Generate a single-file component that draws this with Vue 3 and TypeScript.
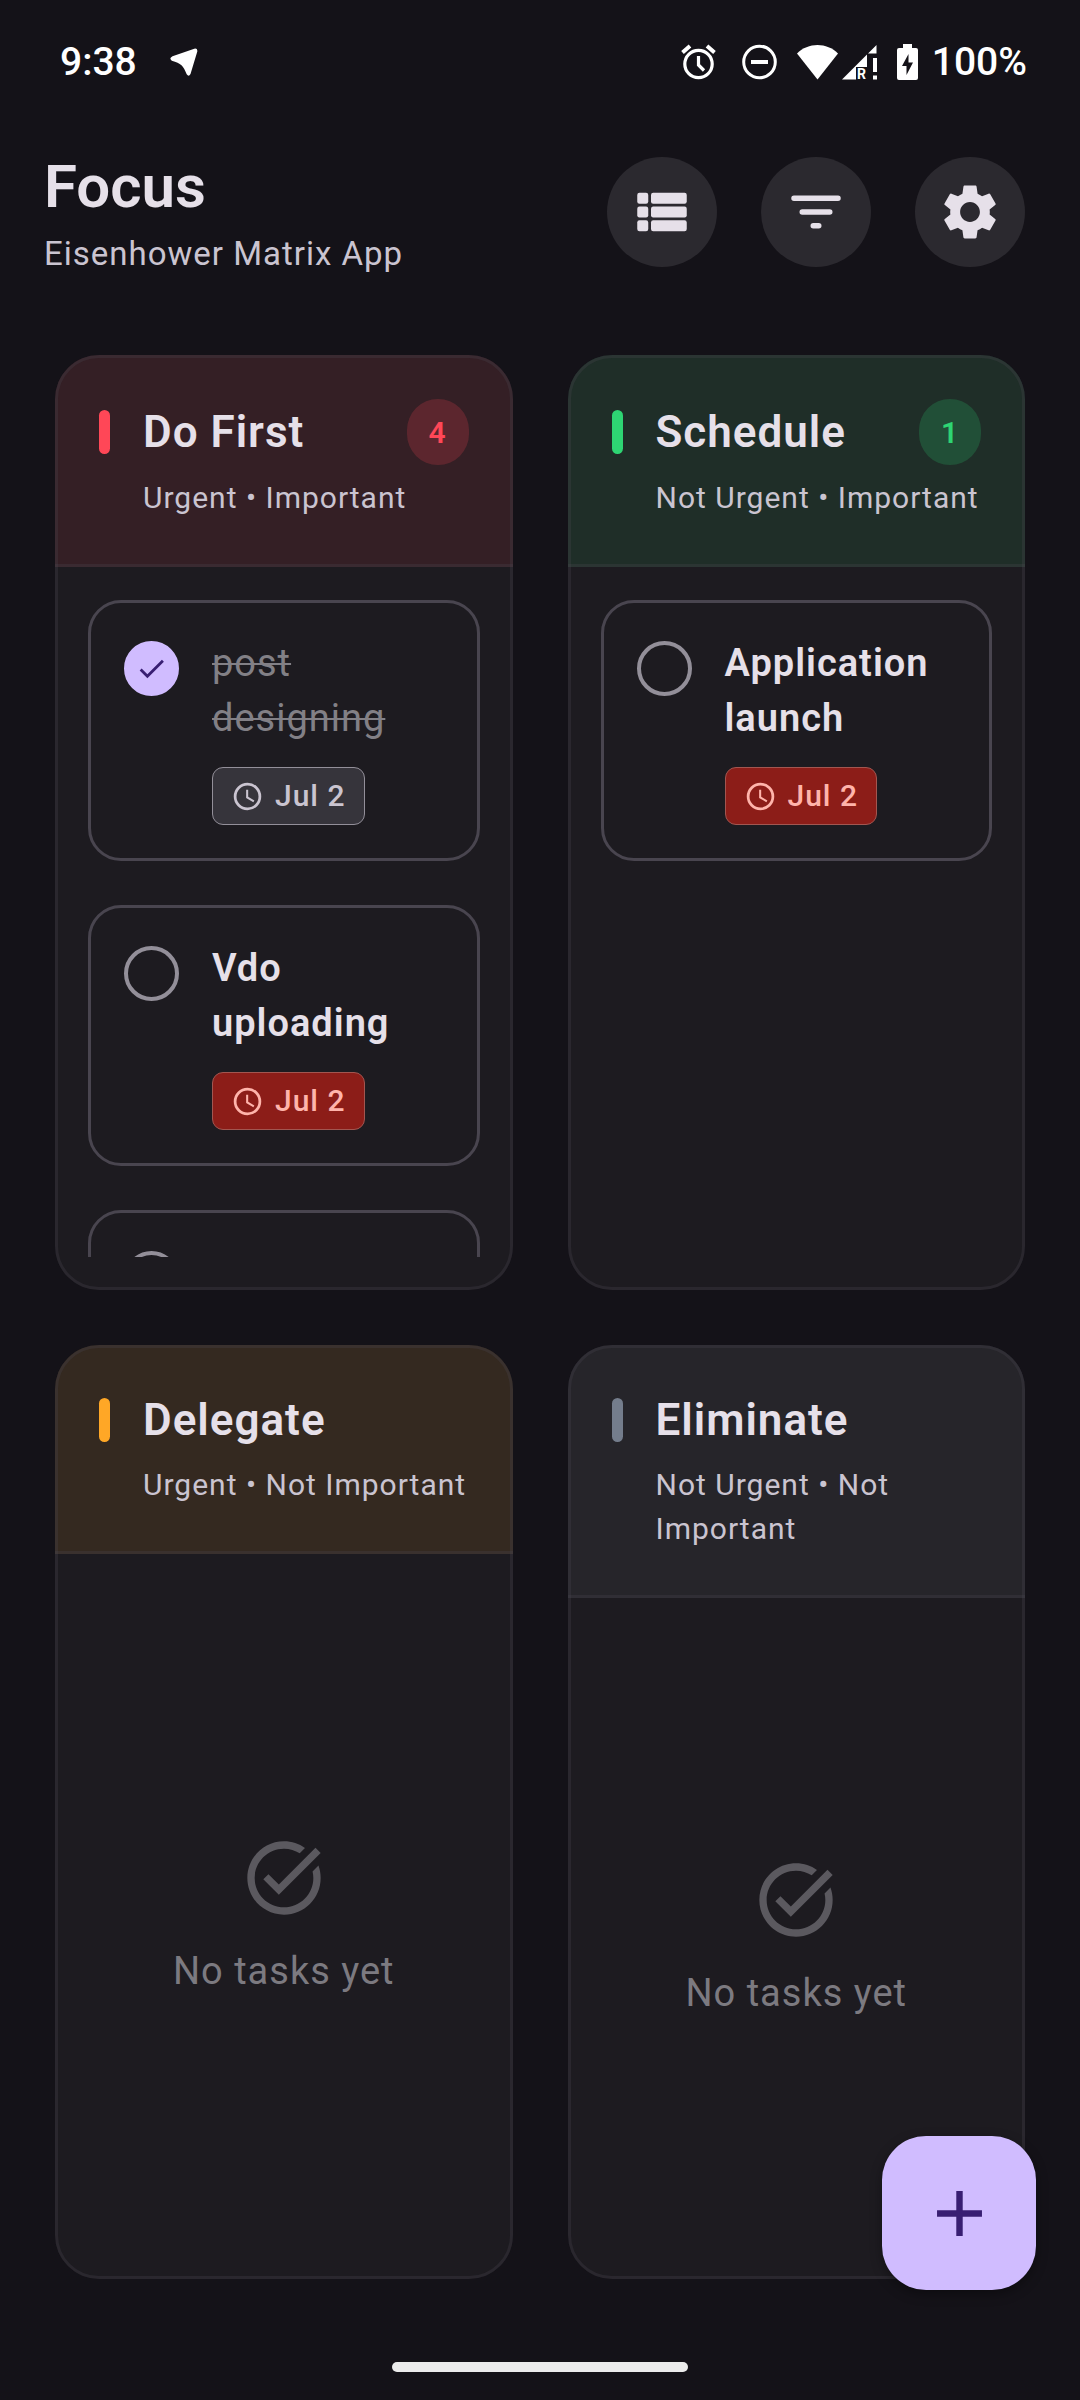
<script setup lang="ts">
import { ref } from 'vue'

interface Task {
  id: number
  title: string
  due: string
  done: boolean
  overdue: boolean
}

interface Quadrant {
  key: string
  title: string
  subtitle: string
  tasks: Task[]
}

const quadrants = ref<Quadrant[]>([
  {
    key: 'first',
    title: 'Do First',
    subtitle: 'Urgent • Important',
    tasks: [
      { id: 1, title: 'post designing', due: 'Jul 2', done: true, overdue: false },
      { id: 2, title: 'Vdo uploading', due: 'Jul 2', done: false, overdue: true },
      { id: 3, title: '', due: '', done: false, overdue: false },
      { id: 4, title: '', due: '', done: false, overdue: false },
    ],
  },
  {
    key: 'schedule',
    title: 'Schedule',
    subtitle: 'Not Urgent • Important',
    tasks: [{ id: 5, title: 'Application launch', due: 'Jul 2', done: false, overdue: true }],
  },
  { key: 'delegate', title: 'Delegate', subtitle: 'Urgent • Not Important', tasks: [] },
  { key: 'eliminate', title: 'Eliminate', subtitle: 'Not Urgent • Not Important', tasks: [] },
])
</script>

<template>
  <div class="screen">
    <div class="status-bar">
      <div class="status-left">
        <span class="status-text">9:38</span>
        <svg class="arrow" viewBox="0 0 28 28" aria-hidden="true">
          <path d="M2.500 8.200 24.300.7q3.400-.6 3 2.800L20.500 26q-1.800 3.200-3.800.2C13.500 18 11 15.200 1.800 12.700q-3.200-2.500.7-4.500z" fill="#fff" />
        </svg>
      </div>
      <div class="status-right">
        <div class="status-group wide">
          <svg class="glyph" viewBox="0 0 35 36" fill="none" stroke="#fff" aria-hidden="true">
            <circle cx="17.500" cy="20" r="13.700" stroke-width="3.200" />
            <path d="M17.500 12v9l5.500 5.500" stroke-width="3.200" />
            <path d="M1.500 8.500 9 2M33.500 8.500 26 2" stroke-width="4" />
          </svg>
          <svg class="glyph" viewBox="0 0 35 36" fill="none" stroke="#fff" aria-hidden="true">
            <circle cx="17.500" cy="18" r="15.800" stroke-width="3" />
            <path d="M9 18h17" stroke-width="4" />
          </svg>
        </div>
        <div class="status-group tight">
          <svg class="wifi" viewBox="0 0 41 36" aria-hidden="true">
            <path d="M20.500 35.500 0 9.500C11-2 30-2 41 9.500z" fill="#fff" />
          </svg>
          <svg class="glyph signal" viewBox="0 0 35 36" fill="#fff" aria-hidden="true">
            <path d="M34.500 1v8.500H26zM25 10.500V23H14v12.500H0z" />
            <path d="M31 14h4v14h-4zM31 31.500h4v4h-4z" />
            <text x="15" y="35" class="roaming">R</text>
          </svg>
        </div>
        <div class="status-group battery-group">
          <svg class="battery" viewBox="0 0 21 36" aria-hidden="true">
            <path d="M6 0h9v4h4q2 0 2 2v28q0 2-2 2H2q-2 0-2-2V6q0-2 2-2h4z" fill="#fff" />
            <path d="M11.500 10v8.500h4.500L9.500 31v-9H5z" fill="#141218" />
          </svg>
          <span class="status-text">100%</span>
        </div>
      </div>
    </div>

    <header class="app-bar">
      <div class="brand">
        <h1>Focus</h1>
        <p>Eisenhower Matrix App</p>
      </div>
      <div class="actions">
        <button type="button" aria-label="List view">
          <svg viewBox="0 0 24 24" fill="currentColor">
            <rect x="3" y="5" width="4" height="4" rx=".8" />
            <rect x="8" y="5" width="13" height="4" rx=".8" />
            <rect x="3" y="10" width="4" height="4" rx=".8" />
            <rect x="8" y="10" width="13" height="4" rx=".8" />
            <rect x="3" y="15" width="4" height="4" rx=".8" />
            <rect x="8" y="15" width="13" height="4" rx=".8" />
          </svg>
        </button>
        <button type="button" aria-label="Filter">
          <svg viewBox="0 0 24 24" fill="none" stroke="currentColor" stroke-width="2" stroke-linecap="round">
            <path d="M4 7h16M7 12h10M11 17h2" />
          </svg>
        </button>
        <button type="button" aria-label="Settings">
          <svg viewBox="0 0 24 24" fill="currentColor">
            <path d="M19.140 12.940c.04-.3.06-.61.06-.94 0-.32-.02-.64-.07-.94l2.030-1.580c.18-.14.23-.41.12-.61l-1.920-3.320c-.12-.22-.37-.29-.59-.22l-2.390.96c-.5-.38-1.030-.7-1.620-.94L14.400 2.810c-.04-.24-.24-.41-.48-.41h-3.840c-.24 0-.43.17-.47.41L9.250 5.350C8.660 5.590 8.120 5.920 7.630 6.290L5.240 5.330c-.22-.08-.47 0-.59.22L2.740 8.870c-.12.21-.08.47.12.61l2.030 1.580c-.05.3-.09.63-.09.94s.02.64.07.94l-2.030 1.580c-.18.14-.23.41-.12.61l1.920 3.320c.12.22.37.29.59.22l2.390-.96c.5.38 1.030.7 1.620.94l.36 2.540c.05.24.24.41.48.41h3.840c.24 0 .44-.17.47-.41l.36-2.540c.59-.24 1.130-.56 1.620-.94l2.390.96c.22.08.47 0 .59-.22l1.920-3.320c.12-.22.07-.47-.12-.61L19.140 12.940zM12 15.600c-1.980 0-3.600-1.620-3.600-3.600s1.620-3.600 3.600-3.600 3.600 1.620 3.600 3.600-1.620 3.600-3.600 3.600z" />
          </svg>
        </button>
      </div>
    </header>

    <main class="matrix">
      <section v-for="q in quadrants" :key="q.key" class="quadrant" :class="q.key">
        <div class="quadrant-head">
          <div class="title-row">
            <span class="marker"></span>
            <h2>{{ q.title }}</h2>
            <span v-if="q.tasks.length" class="count">{{ q.tasks.length }}</span>
          </div>
          <p>{{ q.subtitle }}</p>
        </div>

        <div class="quadrant-body">
          <ul v-if="q.tasks.length" class="task-list">
            <li v-for="t in q.tasks" :key="t.id" class="task" :class="{ done: t.done }">
              <span class="check">
                <input :id="`task-${t.id}`" v-model="t.done" type="checkbox" :aria-label="t.title || 'Task'" />
                <svg v-if="t.done" viewBox="0 0 24 24" aria-hidden="true">
                  <path d="M9 16.170 4.830 12l-1.420 1.410L9 19 21 7l-1.410-1.410z" fill="#381e72" />
                </svg>
              </span>
              <div class="task-info">
                <label :for="`task-${t.id}`">{{ t.title }}</label>
                <span v-if="t.due" class="due" :class="{ overdue: t.overdue }">
                  <svg viewBox="0 0 24 24" aria-hidden="true">
                    <circle cx="12" cy="12" r="9" fill="none" stroke="currentColor" stroke-width="2" />
                    <path d="M12.500 7H11v6l5.250 3.150.75-1.230-4.500-2.670z" fill="currentColor" />
                  </svg>
                  {{ t.due }}
                </span>
              </div>
            </li>
          </ul>
          <div v-else class="empty">
            <svg viewBox="0 0 24 24" aria-hidden="true">
              <path d="M22 5.180 10.590 16.600l-4.240-4.240 1.410-1.410 2.830 2.830 10-10L22 5.180zM19.790 10.220c.13.57.21 1.170.21 1.780 0 4.420-3.580 8-8 8s-8-3.580-8-8 3.580-8 8-8c1.580 0 3.040.46 4.280 1.250l1.440-1.440C16.100 2.670 14.130 2 12 2 6.480 2 2 6.480 2 12s4.480 10 10 10 10-4.480 10-10c0-1.190-.22-2.330-.6-3.390l-1.610 1.610z" fill="currentColor" />
            </svg>
            <p>No tasks yet</p>
          </div>
        </div>
      </section>
    </main>

    <div class="nav-area"><span class="home-handle"></span></div>

    <button type="button" class="fab" aria-label="Add task">
      <svg viewBox="0 0 24 24"><path d="M19 13h-6v6h-2v-6H5v-2h6V5h2v6h6z" fill="#381e72" /></svg>
    </button>
  </div>
</template>

<style>
body {
  margin: 0;
  background: #141218;
}
</style>

<style scoped>
* {
  box-sizing: border-box;
}

h1,
h2,
p,
ul {
  margin: 0;
  padding: 0;
}

svg {
  display: block;
  flex: none;
}

.screen {
  position: relative;
  display: flex;
  flex-direction: column;
  height: 100vh;
  background: #141218;
  color: #e6e0e9;
  font-family: Roboto, "Liberation Sans", sans-serif;
  letter-spacing: 1px;
}

.status-bar {
  display: flex;
  align-items: center;
  justify-content: space-between;
  height: 124px;
  padding: 0 53px 0 60px;
}

.status-left,
.status-right,
.status-group {
  display: flex;
  align-items: center;
}

.status-left {
  gap: 33px;
}

.status-right {
  gap: 20px;
}

.wide {
  gap: 26px;
}

.tight {
  gap: 4px;
}

.battery-group {
  gap: 14px;
}

.status-text {
  color: #fff;
  font-size: 39px;
  line-height: 44px;
  font-weight: 500;
  letter-spacing: 0;
}

.arrow {
  width: 28px;
  height: 28px;
}

.glyph {
  width: 35px;
  height: 36px;
}

.signal {
  overflow: visible;
}

.wifi {
  width: 41px;
  height: 36px;
}

.battery {
  width: 21px;
  height: 36px;
}

.roaming {
  font-size: 14px;
  font-weight: 700;
  letter-spacing: 0;
}

.app-bar {
  display: flex;
  align-items: center;
  justify-content: space-between;
  padding: 24px 55px 24px 44px;
}

.brand {
  display: flex;
  flex-direction: column;
  gap: 6px;
}

h1 {
  font-size: 60px;
  line-height: 78px;
  font-weight: 600;
  letter-spacing: 0;
}

.brand p {
  color: #cac4d0;
  font-size: 33px;
  line-height: 44px;
}

.actions {
  display: flex;
  gap: 44px;
}

.actions button {
  display: grid;
  place-items: center;
  width: 110px;
  height: 110px;
  padding: 0;
  border: 0;
  border-radius: 50%;
  background: #2b292f;
  color: #e6e0e9;
}

.actions svg {
  width: 66px;
  height: 66px;
}

.matrix {
  flex: 1;
  min-height: 0;
  display: grid;
  grid-template-columns: repeat(2, minmax(0, 1fr));
  grid-template-rows: repeat(2, minmax(0, 1fr));
  gap: 55px;
  padding: 55px;
}

.quadrant {
  display: flex;
  flex-direction: column;
  min-height: 0;
  overflow: hidden;
  border-radius: 44px;
  background: #1d1b20;
  outline: 3px solid rgb(73 69 79 / 30%);
  outline-offset: -3px;
}

.first {
  --accent: 255 71 87;
}

.schedule {
  --accent: 46 213 115;
}

.delegate {
  --accent: 255 167 38;
}

.eliminate {
  --accent: 116 125 140;
}

.quadrant-head {
  padding: 44px;
  border-bottom: 3px solid rgb(73 69 79 / 30%);
  background: rgb(var(--accent) / 10%);
}

.title-row {
  display: flex;
  align-items: center;
}

.marker {
  width: 11px;
  height: 44px;
  margin-right: 33px;
  border-radius: 6px;
  background: rgb(var(--accent));
}

h2 {
  flex: 1;
  font-size: 44px;
  line-height: 63px;
  font-weight: 600;
}

.count {
  display: grid;
  place-items: center;
  width: 62px;
  height: 66px;
  border-radius: 33px;
  background: rgb(var(--accent) / 20%);
  color: rgb(var(--accent));
  font-size: 30px;
  font-weight: 600;
}

.quadrant-head p {
  margin-top: 11px;
  padding-left: 44px;
  color: #cac4d0;
  font-size: 30px;
  line-height: 44px;
}

.quadrant-body {
  flex: 1;
  display: flex;
  min-height: 0;
  padding: 33px;
}

.task-list {
  flex: 1;
  display: flex;
  flex-direction: column;
  gap: 44px;
  overflow: hidden;
  list-style: none;
}

.task {
  flex: none;
  display: flex;
  align-items: flex-start;
  gap: 33px;
  min-height: 261px;
  padding: 33px;
  border: 3px solid #49454f;
  border-radius: 33px;
}

.check {
  display: grid;
  place-items: center;
  flex: none;
  margin-top: 5px;
}

.check > * {
  grid-area: 1 / 1;
}

.check input {
  appearance: none;
  width: 55px;
  height: 55px;
  margin: 0;
  border: 4px solid #938f99;
  border-radius: 50%;
}

.check input:checked {
  border-color: #d0bcff;
  background: #d0bcff;
}

.check svg {
  width: 33px;
  height: 33px;
  pointer-events: none;
}

.task-info {
  display: flex;
  flex: 1;
  flex-direction: column;
  align-items: flex-start;
  gap: 21px;
  min-width: 0;
}

.task label {
  font-size: 38px;
  line-height: 55px;
  font-weight: 600;
}

.done label {
  color: #828086;
  font-weight: 400;
  text-decoration: line-through;
  text-decoration-thickness: 2px;
}

.due {
  display: flex;
  align-items: center;
  gap: 11px;
  padding: 6px 18px;
  border: 1px solid #938f99;
  border-radius: 11px;
  background: #36343b;
  color: #cac4d0;
  font-size: 30px;
  line-height: 44px;
  font-weight: 500;
}

.due svg {
  width: 33px;
  height: 33px;
}

.task .overdue {
  border-color: #a25650;
  background: #8c1d18;
  color: #ffb4ab;
}

.empty {
  flex: 1;
  display: flex;
  flex-direction: column;
  align-items: center;
  justify-content: center;
  gap: 22px;
}

.empty svg {
  width: 88px;
  height: 88px;
  color: #5b595f;
}

.empty p {
  color: #7c7a80;
  font-size: 38px;
  line-height: 55px;
}

.nav-area {
  display: flex;
  justify-content: center;
  height: 66px;
  padding-top: 28px;
}

.home-handle {
  width: 296px;
  height: 10px;
  border-radius: 5px;
  background: #ececec;
}

.fab {
  position: absolute;
  right: 44px;
  bottom: 110px;
  display: grid;
  place-items: center;
  width: 154px;
  height: 154px;
  padding: 0;
  border: 0;
  border-radius: 44px;
  background: #d0bcff;
  box-shadow: 0 4px 12px rgb(0 0 0 / 35%);
}

.fab svg {
  width: 77px;
  height: 77px;
}
</style>
